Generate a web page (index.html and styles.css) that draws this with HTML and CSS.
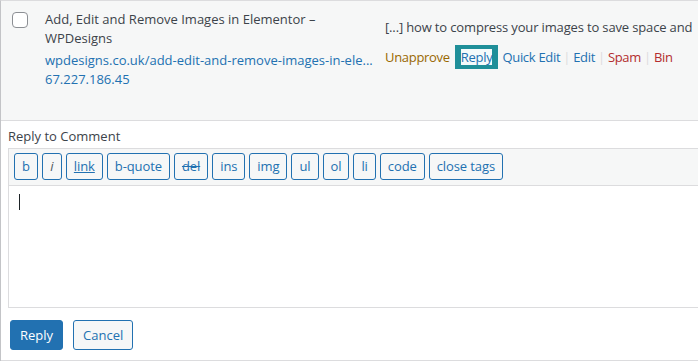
FILE: index.html
```html
<!DOCTYPE html>
<html>
<head>
	<title>comment reply</title>
	<meta charset="UTF-8">
	<link rel="stylesheet" href="styles.css">
</head>
<body>
	<div class="table">
		<div class="row">
			<div class="check"><span class="checkbox"></span></div>
			<div class="author">
				<div class="title">Add, Edit and Remove Images in Elementor –<br>WPDesigns</div>
				<div class="url">wpdesigns.co.uk/add-edit-and-remove-images-in-ele...</div>
				<div class="ip">67.227.186.45</div>
			</div>
			<div class="comment">
				<div class="excerpt">[...] how to compress your images to save space and</div>
				<div class="actions">
					<span class="unapprove">Unapprove</span>
					<span class="reply_focus"><span class="reply_sel">Reply</span></span>
					<span class="link">Quick Edit</span><span class="sep">|</span>
					<span class="link">Edit</span><span class="sep">|</span>
					<span class="trash">Spam</span><span class="sep">|</span>
					<span class="trash">Bin</span>
				</div>
			</div>
		</div>
		<div class="replybox">
			<div class="replyhead">Reply to Comment</div>
			<div class="toolbar">
				<span class="qt">b</span>
				<span class="qt qt_i">i</span>
				<span class="qt qt_link">link</span>
				<span class="qt">b-quote</span>
				<span class="qt qt_del">del</span>
				<span class="qt">ins</span>
				<span class="qt">img</span>
				<span class="qt">ul</span>
				<span class="qt">ol</span>
				<span class="qt">li</span>
				<span class="qt">code</span>
				<span class="qt">close tags</span>
			</div>
			<div class="textarea"><span class="caret"></span></div>
			<div class="submit">
				<span class="btn btn_primary">Reply</span>
				<span class="btn">Cancel</span>
			</div>
		</div>
	</div>
</body>
</html>
```

FILE: styles.css
```css
*{
	margin: 0px;
	padding: 0px;
	box-sizing: border-box;
}
body{
	background-color: #fff;
	font-family: "Open Sans", "Liberation Sans", sans-serif;
	font-size: 13px;
	color: #3c434a;
	overflow: hidden;
}
.table{
	width: 760px;
	border-top: 1px solid #dcdcde;
	border-left: 1px solid #c3c4c7;
}
.row{
	display: flex;
	height: 120px;
	background-color: #f6f7f7;
	border-bottom: 1px solid #dcdcde;
}
.check{
	width: 44px;
	padding: 11px 0 0 11px;
}
.checkbox{
	display: block;
	width: 16px;
	height: 16px;
	border: 1px solid #8c8f94;
	border-radius: 4px;
	background-color: #fff;
}
.author{
	width: 340px;
	padding-top: 9px;
}
.title{
	line-height: 19px;
}
.url{
	color: #2271b1;
	line-height: 19px;
	margin-top: 3px;
	white-space: nowrap;
}
.ip{
	color: #2271b1;
	line-height: 19px;
}
.comment{
	padding-top: 17px;
	letter-spacing: -0.15px;
}
.excerpt{
	line-height: 19px;
	white-space: nowrap;
}
.actions{
	margin-top: 8px;
	height: 24px;
	white-space: nowrap;
	display: flex;
	align-items: center;
	letter-spacing: -0.3px;
}
.unapprove{
	color: #996800;
	margin-right: 5px;
}
.reply_focus{
	display: block;
	background-color: #1f8f99;
	padding: 4px 6px;
	margin-right: 4px;
	height: 24px;
}
.reply_sel{
	display: block;
	background-color: #f4fafb;
	color: #2271b1;
	line-height: 16px;
	height: 16px;
}
.link{
	color: #2271b1;
}
.trash{
	color: #b32d2e;
}
.sep{
	color: #dcdcde;
	margin: 0 3px;
}
.replybox{
	padding: 6px 0 0 7px;
	border-bottom: 1px solid #dcdcde;
	height: 240px;
}
.replyhead{
	line-height: 18px;
	height: 21px;
}
.toolbar{
	display: flex;
	gap: 4px;
	border: 1px solid #dcdcde;
	background-color: #f6f7f7;
	padding: 4px 5px 4px;
	height: 38px;
}
.qt{
	display: block;
	height: 27px;
	line-height: 25px;
	padding: 0 7px;
	min-width: 20px;
	text-align: center;
	color: #2271b1;
	border: 1px solid #2271b1;
	border-radius: 3px;
	background-color: #f6f7f7;
	letter-spacing: -0.1px;
}
.qt_i{
	font-style: italic;
	color: #50575e;
}
.qt_link{
	text-decoration: underline;
}
.qt_del{
	text-decoration: line-through;
}
.textarea{
	height: 122px;
	border: 1px solid #dcdcde;
	border-top: none;
	padding: 8px 10px;
}
.caret{
	display: block;
	width: 1px;
	height: 16px;
	background-color: #1d2327;
}
.submit{
	display: flex;
	gap: 10px;
	padding: 12px 0 0 2px;
}
.btn{
	display: block;
	height: 30px;
	line-height: 28px;
	padding: 0 9px;
	border: 1px solid #2271b1;
	border-radius: 3px;
	color: #2271b1;
	background-color: #f6f7f7;
}
.btn_primary{
	background-color: #2271b1;
	color: #fff;
}
```
